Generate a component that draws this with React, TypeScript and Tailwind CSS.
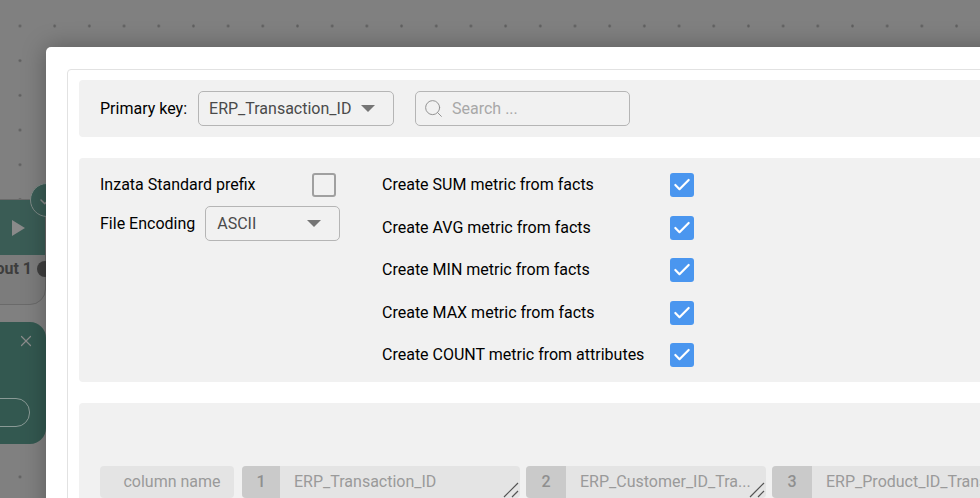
import { Check, Search, X } from "lucide-react";

const METRICS = [
  "Create SUM metric from facts",
  "Create AVG metric from facts",
  "Create MIN metric from facts",
  "Create MAX metric from facts",
  "Create COUNT metric from attributes",
];

const COLUMNS = [
  { n: 1, name: "ERP_Transaction_ID", width: "w-[278px]", box: "w-[38px]" },
  { n: 2, name: "ERP_Customer_ID_Tra...", width: "w-[240px]", box: "w-[40px]" },
  { n: 3, name: "ERP_Product_ID_Transaction", width: "w-[240px]", box: "w-[40px]" },
];

function Caret() {
  return <span className="h-0 w-0 border-x-[7px] border-t-[7px] border-x-transparent border-t-[#757575]" />;
}

function Grip() {
  return (
    <svg className="absolute bottom-0 right-0" width="18" height="18" viewBox="0 0 18 18" fill="none" stroke="#555" strokeWidth="1.2">
      <path d="M2 17L16 3M10 17L16 11" />
    </svg>
  );
}

export default function App() {
  return (
    <div className="relative h-[498px] w-[980px] overflow-hidden bg-[#808080] bg-[radial-gradient(circle,#5f5f5f_1.2px,transparent_1.5px)] bg-[size:34.7px_34.7px] bg-[position:2.65px_8.65px] font-['Roboto',sans-serif]">
      {/* Canvas nodes behind the modal */}
      <div className="absolute left-[-60px] top-[199px] h-[106px] w-[106px] rounded-b-[16px] border border-[#6a6a6a] bg-[#7c7c7c]">
        <div className="flex h-[55px] items-center justify-end bg-[#3a5c55] pr-[20px]">
          <span className="h-0 w-0 border-y-[8px] border-l-[13px] border-y-transparent border-l-[#8a8a8a]" />
        </div>
        <div className="mt-[2px] flex items-center justify-end gap-[5px] text-[16px] font-bold text-[#3d3d3d]">
          <span>out 1</span>
          <span className="mr-[-8px] h-[16px] w-[16px] rounded-full bg-[#3f3f3f]" />
        </div>
      </div>
      <div className="absolute left-[30px] top-[183px] flex h-[34px] w-[34px] items-center justify-center rounded-full border border-[#7f8a87] bg-[#3a5c55]">
        <Check size={18} className="text-[#8a8a8a]" />
      </div>
      <div className="absolute left-[-60px] top-[322px] h-[122px] w-[106px] rounded-[16px] bg-[#335850]">
        <X size={18} strokeWidth={1.6} className="absolute right-[11px] top-[10px] text-[#8c8c8c]" />
        <div className="absolute bottom-[17px] right-[16px] h-[29px] w-[90px] rounded-[14px] border border-[#8a9a96]" />
      </div>

      {/* Modal */}
      <div className="absolute left-[46px] top-[47px] h-[520px] w-[1000px] rounded-[5px] bg-white pl-[21px] pt-[22px] shadow-[0_0_24px_rgba(0,0,0,0.3)]">
        <div className="flex h-full flex-col gap-[21px] rounded-[4px] border border-[#e2e2e2] pl-[11px] pt-[10px] text-[16px] text-black">
          <div className="flex h-[57px] items-center rounded-[4px] bg-[#f1f1f1] pl-[21px]">
            <span>Primary key:</span>
            <div className="ml-[11px] flex h-[35px] w-[196px] items-center justify-between rounded-[5px] border border-[#b5b5b5] pl-[10px] pr-[18px] text-[#4a4a4a]">
              <span>ERP_Transaction_ID</span>
              <Caret />
            </div>
            <div className="ml-[21px] flex h-[35px] w-[215px] items-center rounded-[5px] border border-[#b5b5b5] pl-[7px] text-[#a8a8a8]">
              <Search size={21} strokeWidth={1.1} className="text-[#909090]" />
              <span className="ml-[8px]">Search ...</span>
            </div>
          </div>

          <div className="flex h-[224px] rounded-[4px] bg-[#f1f1f1] pl-[21px] pt-[15px]">
            <div className="flex w-[240px] flex-col">
              <div className="flex h-[24px] items-center justify-between pr-[4px]">
                <span>Inzata Standard prefix</span>
                <span className="h-[24px] w-[24px] rounded-[3px] border-[2.5px] border-[#a0a0a0]" />
              </div>
              <div className="mt-[9px] flex items-center whitespace-nowrap">
                <span>File Encoding</span>
                <div className="ml-[10px] flex h-[35px] w-[135px] shrink-0 items-center justify-between rounded-[5px] border border-[#b5b5b5] pl-[11px] pr-[18px] text-[#4a4a4a]">
                  <span>ASCII</span>
                  <Caret />
                </div>
              </div>
            </div>
            <div className="ml-[42px] flex flex-col gap-[18.6px]">
              {METRICS.map((m) => (
                <div key={m} className="flex h-[24px] items-center">
                  <span className="w-[288px]">{m}</span>
                  <span className="flex h-[24px] w-[24px] items-center justify-center rounded-[3px] bg-[#4a96ef]">
                    <Check size={20} strokeWidth={2.6} className="text-white" />
                  </span>
                </div>
              ))}
            </div>
          </div>

          <div className="flex flex-1 items-start gap-[6px] rounded-[4px] bg-[#f1f1f1] pl-[21px] pt-[63px]">
            <div className="mr-[2px] flex h-[32px] w-[134px] items-center justify-center rounded-[4px] bg-[#e4e4e4] pl-[10px] text-[#9a9a9a]">
              column name
            </div>
            {COLUMNS.map((c) => (
              <div key={c.n} className={`relative flex h-[32px] shrink-0 overflow-hidden rounded-[4px] bg-[#e4e4e4] text-[#9a9a9a] ${c.width}`}>
                <span className={`flex shrink-0 items-center justify-center bg-[#cacaca] font-medium text-[#8f8f8f] ${c.box}`}>{c.n}</span>
                <span className="flex items-center pl-[14px] whitespace-nowrap">{c.name}</span>
                <Grip />
              </div>
            ))}
          </div>
        </div>
      </div>
    </div>
  );
}
